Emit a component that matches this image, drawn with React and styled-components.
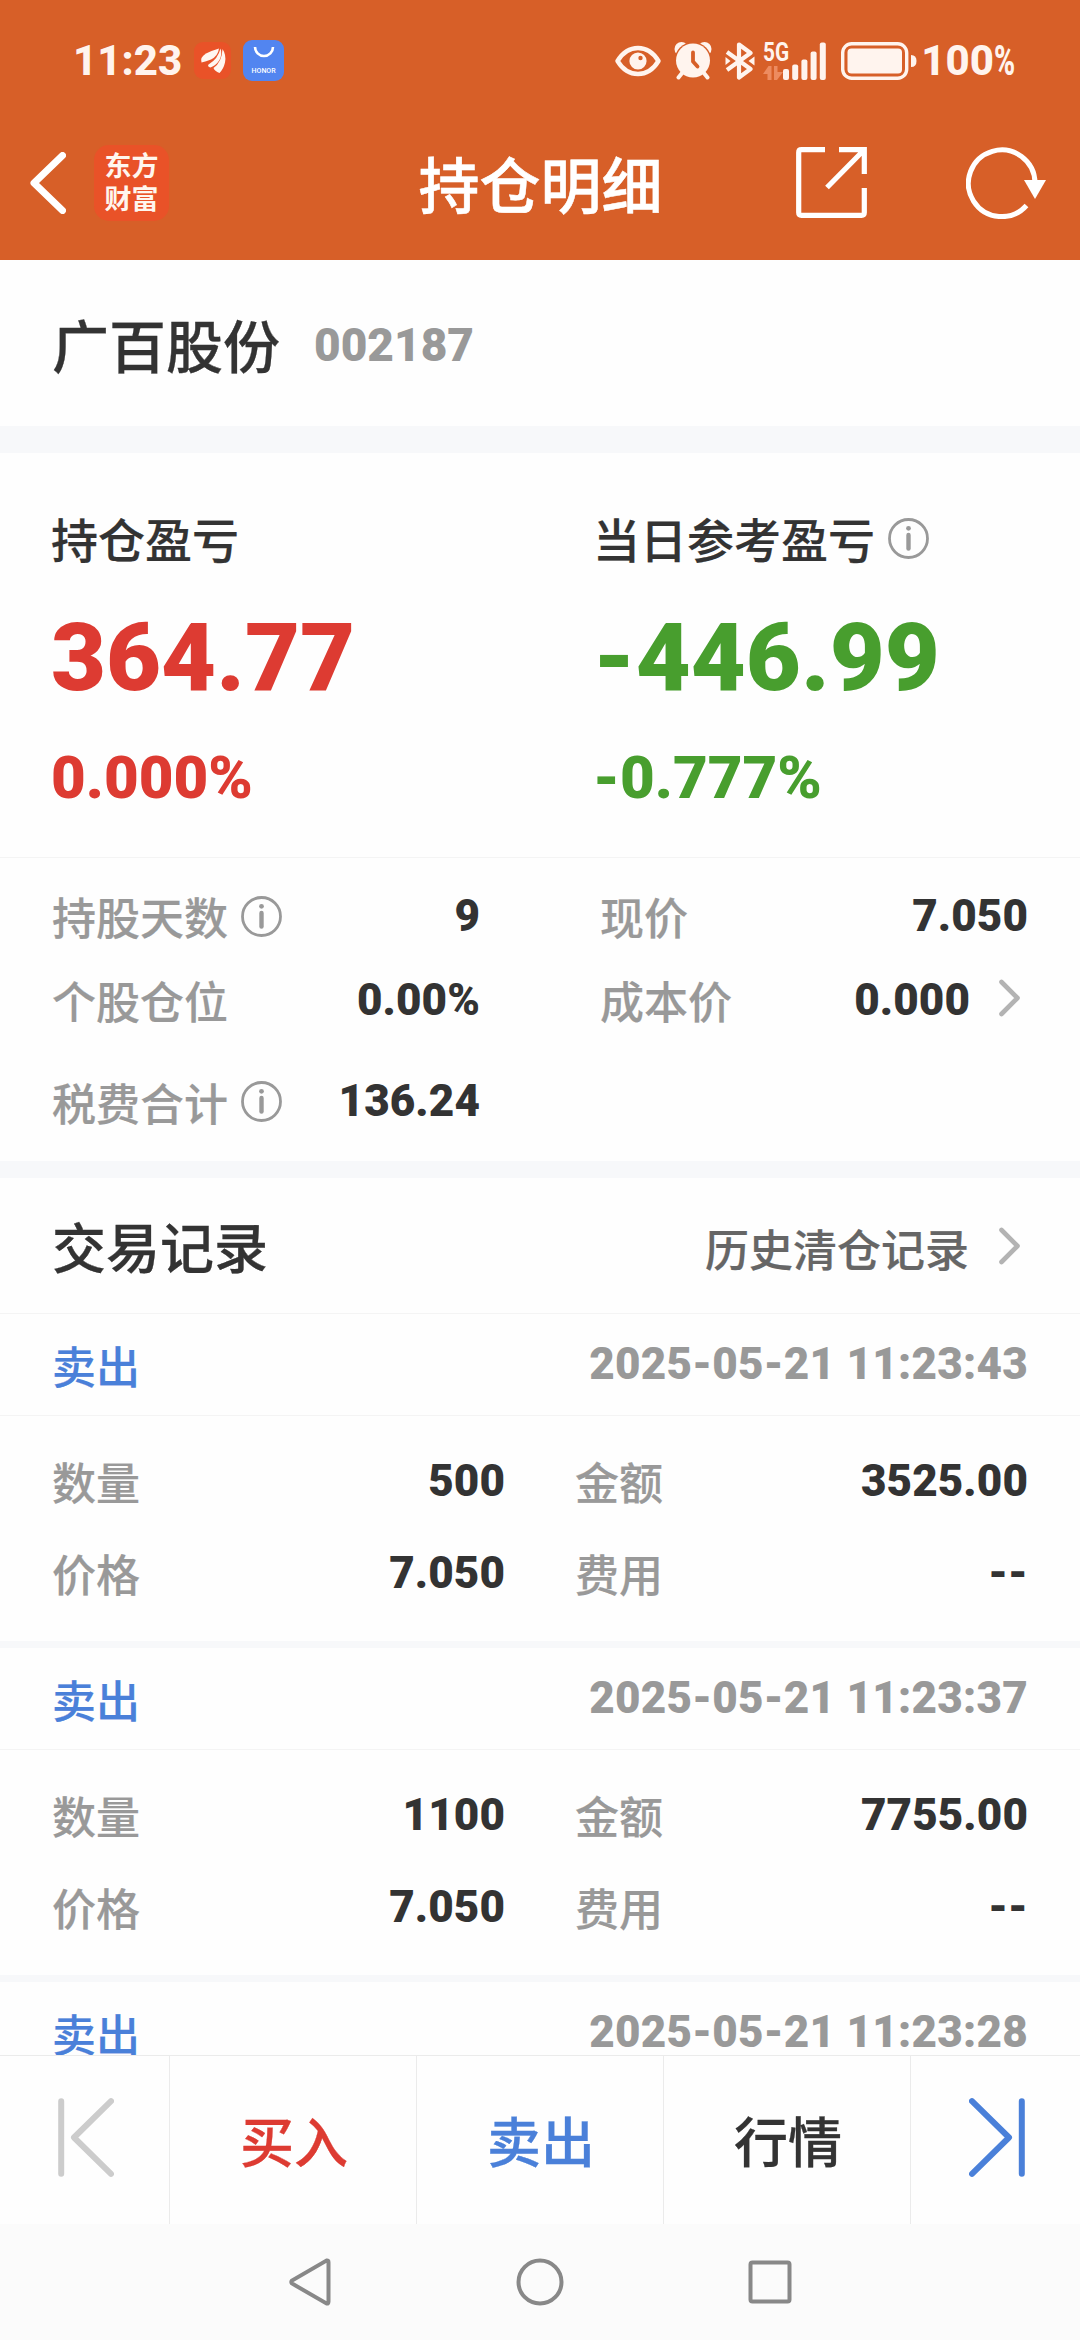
import React from 'react';
import styled, { createGlobalStyle } from 'styled-components';

const GlobalStyle = createGlobalStyle`
  * {
    box-sizing: border-box;
  }
  body {
    margin: 0;
    background: #fefefe;
    font-family: 'Roboto', 'Noto Sans CJK SC', sans-serif;
    color: #333333;
  }
  svg {
    display: block;
    flex: none;
  }
`;

const cjk = `'Noto Sans CJK SC', sans-serif`;

const Screen = styled.div`
  width: 1080px;
  height: 2340px;
  display: flex;
  flex-direction: column;
  overflow: hidden;
`;

const Header = styled.header`
  height: 260px;
  flex: none;
  background: #d75f28;
  color: #ffffff;
`;

const StatusBar = styled.div`
  height: 105px;
  padding: 16px 67px 0 73px;
  display: flex;
  align-items: center;
  justify-content: space-between;
  color: #fff4ee;
`;

const StatusGroup = styled.div`
  display: flex;
  align-items: center;
  gap: ${props => props.gap || 0}px;
`;

const StatusText = styled.span`
  font-size: 42px;
  font-weight: 800;
  line-height: 50px;
`;

const Percent = styled.span`
  display: inline-block;
  margin-right: -12px;
  transform: scaleX(0.68);
  transform-origin: left;
`;

const AppBadge = styled.span`
  width: ${props => props.size}px;
  height: ${props => props.size}px;
  margin-left: ${props => props.offset}px;
  border-radius: 9px;
  background: ${props => props.fill};
  display: flex;
  flex-direction: column;
  align-items: center;
  justify-content: center;
`;

const HonorText = styled.span`
  margin-top: 9px;
  font-size: 7px;
  font-weight: 500;
  line-height: 8px;
  color: #ffffff;
`;

const Network = styled.div`
  width: 62px;
  height: 38px;
  margin: 0 3px 0 -5px;
  display: flex;
  justify-content: space-between;
`;

const NetworkType = styled.div`
  width: 20px;
  height: 38px;
  display: flex;
  flex-direction: column;
  justify-content: space-between;
`;

const NetworkText = styled.span`
  font-size: 26px;
  font-weight: 700;
  line-height: 20px;
  transform: scaleX(0.8);
  transform-origin: left;
`;

const NavBar = styled.div`
  height: 155px;
  padding: 0 34px 0 29px;
  display: grid;
  grid-template-columns: 1fr auto 1fr;
  align-items: center;
`;

const NavLeft = styled.div`
  display: flex;
  align-items: center;
  gap: 28px;
`;

const NavRight = styled.div`
  display: flex;
  align-items: center;
  justify-content: flex-end;
  gap: 99px;
`;

const BrandLogo = styled.div`
  width: 75px;
  height: 76px;
  padding-top: 2px;
  border-radius: 15px;
  background: #e95228;
  display: flex;
  flex-direction: column;
  align-items: center;
  justify-content: center;
  font-size: 27px;
  font-weight: 700;
  line-height: 33px;
  color: #fff6ee;
`;

const PageTitle = styled.h1`
  margin: 0;
  padding-left: 6px;
  font: 500 61px/80px ${cjk};
  -webkit-text-stroke: 0.5px currentColor;
`;

const Content = styled.main`
  height: 1795px;
  flex: none;
  overflow: hidden;
`;

const Band = styled.div`
  height: ${props => props.size}px;
  background: #f7f8fa;
`;

const StockRow = styled.div`
  height: 166px;
  padding: 0 52px;
  display: flex;
  align-items: center;
  gap: 34px;
`;

const StockName = styled.h2`
  margin: 0;
  font: 500 57px/80px ${cjk};
  -webkit-text-stroke: 0.3px currentColor;
`;

const StockCode = styled.span`
  padding-top: 3px;
  font-size: 46px;
  font-weight: 900;
  line-height: 60px;
  color: #999999;
`;

const ProfitPanel = styled.section`
  height: 404px;
  padding: 55px 0 0 51px;
  display: grid;
  grid-template-columns: 542px 1fr;
`;

const ProfitTitle = styled.div`
  height: 60px;
  display: flex;
  align-items: center;
  gap: 13px;
  font: 500 47px/60px ${cjk};
  -webkit-text-stroke: 0.2px currentColor;
`;

const ProfitAmount = styled.div`
  font-size: 95px;
  font-weight: 900;
  line-height: 179px;
  color: ${props => props.tone};
`;

const ProfitRate = styled.div`
  font-size: 60px;
  font-weight: 900;
  line-height: 62px;
  color: ${props => props.tone};
`;

const DetailPanel = styled.section`
  height: 304px;
  padding: 16px 52px 0;
  border-top: 1px solid #f4f4f4;
  display: grid;
  grid-template-columns: 428px 428px;
  grid-template-rows: 84px 84px 119px;
  column-gap: 120px;
`;

const Field = styled.div`
  display: flex;
  align-items: center;
  justify-content: space-between;
`;

const Label = styled.span`
  display: flex;
  align-items: center;
  gap: 13px;
  font: 500 44px/60px ${cjk};
  -webkit-text-stroke: 0.2px currentColor;
  color: #999999;
`;

const Value = styled.span`
  padding-bottom: 1px;
  display: flex;
  align-items: center;
  gap: 29px;
  font-size: 44px;
  font-weight: 900;
  letter-spacing: ${props => (props.muted ? 0.25 : 0.1)}px;
  line-height: 60px;
  color: ${props => (props.muted ? '#999999' : '#333333')};
`;

const ChevronBox = styled.span`
  padding: 0 7px 3px 0;
`;

const RecordsHeader = styled.div`
  height: 136px;
  padding: 0 52px;
  border-bottom: 1px solid #f4f4f4;
  display: flex;
  align-items: center;
  justify-content: space-between;
`;

const RecordsTitle = styled.h3`
  margin: 0;
  font: 500 54px/80px ${cjk};
  -webkit-text-stroke: 0.3px currentColor;
`;

const HistoryLink = styled.a`
  padding-top: 4px;
  display: flex;
  align-items: center;
  gap: 30px;
  font: 500 44px/60px ${cjk};
  -webkit-text-stroke: 0.2px currentColor;
  color: #666666;
`;

const Record = styled.article`
  border-bottom: 7px solid #f7f8fa;
`;

const RecordHead = styled.div`
  height: 101px;
  padding: 0 52px;
  display: flex;
  align-items: center;
  justify-content: space-between;
`;

const TradeSide = styled.span`
  font: 500 44px/60px ${cjk};
  -webkit-text-stroke: 0.2px currentColor;
  color: #4a80d9;
`;

const RecordBody = styled.div`
  height: 226px;
  padding: 19px 52px 0;
  border-top: 1px solid #f4f4f4;
  display: grid;
  grid-template-columns: 453px 453px;
  grid-template-rows: 92px 92px;
  column-gap: 70px;
`;

const ActionBar = styled.nav`
  height: 169px;
  flex: none;
  border-top: 1px solid #ebebeb;
  display: grid;
  grid-template-columns: 169px 247px 247px 247px 170px;
`;

const Action = styled.div`
  display: flex;
  align-items: center;
  justify-content: center;
  font: 500 54px/80px ${cjk};
  -webkit-text-stroke: 0.3px currentColor;
  color: ${props => props.tone || '#333333'};
  padding: 0 0 ${props => (props.icon ? 5 : 0)}px 2px;

  & + & {
    border-left: 1px solid #ebebeb;
  }
`;

const SystemNav = styled.footer`
  height: 116px;
  flex: none;
  background: #fbfbfb;
  display: grid;
  grid-template-columns: 230px 230px 230px;
  justify-content: center;
  align-items: center;
  justify-items: center;
`;

const RED = '#dd3b32';
const GREEN = '#489e2e';
const BLUE = '#4a80d9';

const InfoIcon = () => (
  <svg width="41" height="41" viewBox="0 0 41 41">
    <circle cx="20.5" cy="20.5" r="19" fill="none" stroke="#999" strokeWidth="2.8" />
    <circle cx="20.5" cy="10.3" r="2.4" fill="#999" />
    <path d="M20.5 17v13.500" stroke="#999" strokeWidth="4.4" strokeLinecap="round" />
  </svg>
);

const Chevron = () => (
  <ChevronBox>
    <svg width="22" height="38" viewBox="0 0 22 38">
      <path
        d="M2.5 3 18.5 19 2.5 35"
        fill="none"
        stroke="#b3b3b3"
        strokeWidth="4.6"
        strokeLinecap="round"
        strokeLinejoin="round"
      />
    </svg>
  </ChevronBox>
);

const EastMoneyIcon = () => (
  <svg width="37" height="37" viewBox="0 0 37 37" fill="#fff6f0">
    <path d="M7.5 20.5Q6 15 12 11.5 18 8.5 25 6.5 24 14 17 17.5 12 19.500 7.500 20.500Z" />
    <path d="M16.500 25.500Q13 24.500 14.500 22.500 24 17 26.500 6.500 28.500 12 25.500 18 22 23.500 16.500 25.500Z" />
    <path d="M25.500 31Q20.500 29 19.500 26 28 20 28.500 7 32.500 13 31 20.500 29.500 27 25.500 31Z" />
  </svg>
);

const EyeIcon = () => (
  <svg width="46" height="32" viewBox="0 0 46 32">
    <path
      d="M2.500 16C8 7 15 3 23 3s15 4 20.500 13C38 25 31 29 23 29S8 25 2.500 16Z"
      fill="none"
      stroke="currentColor"
      strokeWidth="4.4"
      strokeLinejoin="round"
    />
    <circle cx="23" cy="16" r="8.600" fill="currentColor" />
    <circle cx="25.500" cy="13" r="2.200" fill="#d75f28" />
  </svg>
);

const AlarmIcon = () => (
  <svg width="38" height="38" viewBox="0 0 38 38">
    <circle cx="7.500" cy="7" r="7" fill="currentColor" />
    <circle cx="30.500" cy="7" r="7" fill="currentColor" />
    <circle cx="19" cy="18.500" r="18.500" fill="#d75f28" />
    <circle cx="19" cy="18.500" r="17" fill="currentColor" />
    <path
      d="M8.500 30.500 4.500 35.500M29.500 30.500l4 5"
      stroke="currentColor"
      strokeWidth="4"
      strokeLinecap="round"
    />
    <path
      d="M19 10.500v9l4.500 5"
      fill="none"
      stroke="#d75f28"
      strokeWidth="3.800"
      strokeLinecap="round"
      strokeLinejoin="round"
    />
  </svg>
);

const BluetoothIcon = () => (
  <svg width="30" height="38" viewBox="0 0 30 38">
    <path
      d="M2 10 25.500 27 14 35.500V2.500L25.500 11 2 28"
      fill="none"
      stroke="currentColor"
      strokeWidth="4.200"
      strokeLinejoin="round"
    />
    <path d="M0.500 15l5 4-5 4zM29.500 14.500l-6 4.500 6 4.500z" fill="currentColor" />
  </svg>
);

const DataArrows = () => (
  <svg width="20" height="14" viewBox="0 0 20 14" fill="#ed8b60">
    <path d="M0 8 5.500 0H8.500V14H4.500V8ZM20 6l-6 8H11V0h3.500v6Z" />
  </svg>
);

const SignalBars = () => (
  <svg width="43" height="38" viewBox="0 0 43 38" fill="currentColor">
    <rect x="0" y="27" width="6" height="11" rx="2" />
    <rect x="9.200" y="22.500" width="6" height="15.500" rx="2" />
    <rect x="18.400" y="17.500" width="6" height="20.500" rx="2" />
    <rect x="27.600" y="9.500" width="6" height="28.500" rx="2" />
    <rect x="36.800" y="0.500" width="6" height="37.500" rx="2" />
  </svg>
);

const BatteryIcon = () => (
  <svg width="76" height="38" viewBox="0 0 76 38">
    <rect
      x="1.700"
      y="1.700"
      width="64"
      height="34.600"
      rx="9"
      fill="none"
      stroke="currentColor"
      strokeWidth="3.400"
    />
    <rect x="6.500" y="6.500" width="54.500" height="25" rx="4" fill="currentColor" />
    <path d="M70 13q5.500 0 5.500 6T70 25z" fill="currentColor" />
  </svg>
);

const BackIcon = () => (
  <svg width="37" height="62" viewBox="0 0 37 62">
    <path
      d="M33.500 3.500 5 31l28.500 27.500"
      fill="none"
      stroke="#fff"
      strokeWidth="7"
      strokeLinecap="round"
      strokeLinejoin="round"
    />
  </svg>
);

const ShareIcon = () => (
  <svg width="71" height="71" viewBox="0 0 71 71" fill="none" stroke="#fff" strokeWidth="5.200">
    <path d="M29 2.700H5.500Q2.700 2.700 2.700 5.500V65.500Q2.700 68.300 5.500 68.300H65.500Q68.300 68.300 68.300 65.500V41" />
    <path d="M43 2.700H68.300V27M67 4 31 40.500" />
  </svg>
);

const RefreshIcon = () => (
  <svg width="80" height="72" viewBox="0 0 80 72">
    <path
      d="M60.500 58.500A33.300 33.300 0 1 1 69 36"
      fill="none"
      stroke="#fff"
      strokeWidth="5"
    />
    <path d="M58 33H80L69 52Z" fill="#fff" />
  </svg>
);

const FirstIcon = () => (
  <svg width="56" height="79" viewBox="0 0 56 79">
    <path
      d="M3.200 3.200v72.600M53 3.200 16 39.500 53 75.800"
      fill="none"
      stroke="#cccccc"
      strokeWidth="6"
      strokeLinecap="round"
      strokeLinejoin="round"
    />
  </svg>
);

const LastIcon = () => (
  <svg width="56" height="79" viewBox="0 0 56 79">
    <path
      d="M52.800 3.200v72.600M3 3.200 40 39.500 3 75.800"
      fill="none"
      stroke={BLUE}
      strokeWidth="6"
      strokeLinecap="round"
      strokeLinejoin="round"
    />
  </svg>
);

const profits = [
  { title: '持仓盈亏', amount: '364.77', rate: '0.000%', tone: RED },
  { title: '当日参考盈亏', amount: '-446.99', rate: '-0.777%', tone: GREEN, info: true },
];

const details = [
  { label: '持股天数', value: '9', info: true },
  { label: '现价', value: '7.050' },
  { label: '个股仓位', value: '0.00%' },
  { label: '成本价', value: '0.000', link: true },
  { label: '税费合计', value: '136.24', info: true },
];

const records = [
  { time: '2025-05-21 11:23:43', count: '500', amount: '3525.00', price: '7.050', fee: '--' },
  { time: '2025-05-21 11:23:37', count: '1100', amount: '7755.00', price: '7.050', fee: '--' },
  { time: '2025-05-21 11:23:28' },
];

const DetailField = ({ label, value, info, link }) => (
  <Field>
    <Label>
      {label}
      {info && <InfoIcon />}
    </Label>
    <Value>
      {value}
      {link && <Chevron />}
    </Value>
  </Field>
);

const TradeRecord = ({ time, count, amount, price, fee }) => (
  <Record>
    <RecordHead>
      <TradeSide>卖出</TradeSide>
      <Value muted>{time}</Value>
    </RecordHead>
    {count && (
      <RecordBody>
        <DetailField label="数量" value={count} />
        <DetailField label="金额" value={amount} />
        <DetailField label="价格" value={price} />
        <DetailField label="费用" value={fee} />
      </RecordBody>
    )}
  </Record>
);

const App = () => (
  <>
    <GlobalStyle />
    <Screen>
      <Header>
        <StatusBar>
          <StatusGroup>
            <StatusText>11:23</StatusText>
            <AppBadge size={37} offset={12} fill="#e95228">
              <EastMoneyIcon />
            </AppBadge>
            <AppBadge size={41} offset={12} fill="#5285f0">
              <svg width="22" height="12" viewBox="0 0 22 12">
                <path d="M2 1a9 9 0 0 0 18 0" fill="none" stroke="#fff" strokeWidth="2.600" />
              </svg>
              <HonorText>HONOR</HonorText>
            </AppBadge>
          </StatusGroup>
          <StatusGroup gap={13}>
            <EyeIcon />
            <AlarmIcon />
            <BluetoothIcon />
            <Network>
              <NetworkType>
                <NetworkText>5G</NetworkText>
                <DataArrows />
              </NetworkType>
              <SignalBars />
            </Network>
            <StatusGroup gap={4}>
              <BatteryIcon />
              <StatusText>
                100<Percent>%</Percent>
              </StatusText>
            </StatusGroup>
          </StatusGroup>
        </StatusBar>
        <NavBar>
          <NavLeft>
            <BackIcon />
            <BrandLogo>
              <span>东方</span>
              <span>财富</span>
            </BrandLogo>
          </NavLeft>
          <PageTitle>持仓明细</PageTitle>
          <NavRight>
            <ShareIcon />
            <RefreshIcon />
          </NavRight>
        </NavBar>
      </Header>

      <Content>
        <StockRow>
          <StockName>广百股份</StockName>
          <StockCode>002187</StockCode>
        </StockRow>
        <Band size={27} />

        <ProfitPanel>
          {profits.map(({ title, amount, rate, tone, info }) => (
            <div key={title}>
              <ProfitTitle>
                {title}
                {info && <InfoIcon />}
              </ProfitTitle>
              <ProfitAmount tone={tone}>{amount}</ProfitAmount>
              <ProfitRate tone={tone}>{rate}</ProfitRate>
            </div>
          ))}
        </ProfitPanel>

        <DetailPanel>
          {details.map(item => (
            <DetailField key={item.label} {...item} />
          ))}
        </DetailPanel>
        <Band size={17} />

        <RecordsHeader>
          <RecordsTitle>交易记录</RecordsTitle>
          <HistoryLink>
            历史清仓记录
            <Chevron />
          </HistoryLink>
        </RecordsHeader>
        {records.map(item => (
          <TradeRecord key={item.time} {...item} />
        ))}
      </Content>

      <ActionBar>
        <Action icon>
          <FirstIcon />
        </Action>
        <Action tone={RED}>买入</Action>
        <Action tone={BLUE}>卖出</Action>
        <Action>行情</Action>
        <Action icon>
          <LastIcon />
        </Action>
      </ActionBar>

      <SystemNav>
        <svg width="42" height="48" viewBox="0 0 42 48">
          <path
            d="M37.500 2.500Q39.500 2 39.500 4.500V43.500Q39.500 46 37.500 45.500L3 25.500Q1.500 24 3 22.500Z"
            fill="none"
            stroke="#888"
            strokeWidth="4"
          />
        </svg>
        <svg width="48" height="48" viewBox="0 0 48 48">
          <circle cx="24" cy="24" r="21.500" fill="none" stroke="#888" strokeWidth="4" />
        </svg>
        <svg width="44" height="44" viewBox="0 0 44 44">
          <rect x="2.500" y="2.500" width="39" height="39" rx="2" fill="none" stroke="#888" strokeWidth="4" />
        </svg>
      </SystemNav>
    </Screen>
  </>
);

export default App;
